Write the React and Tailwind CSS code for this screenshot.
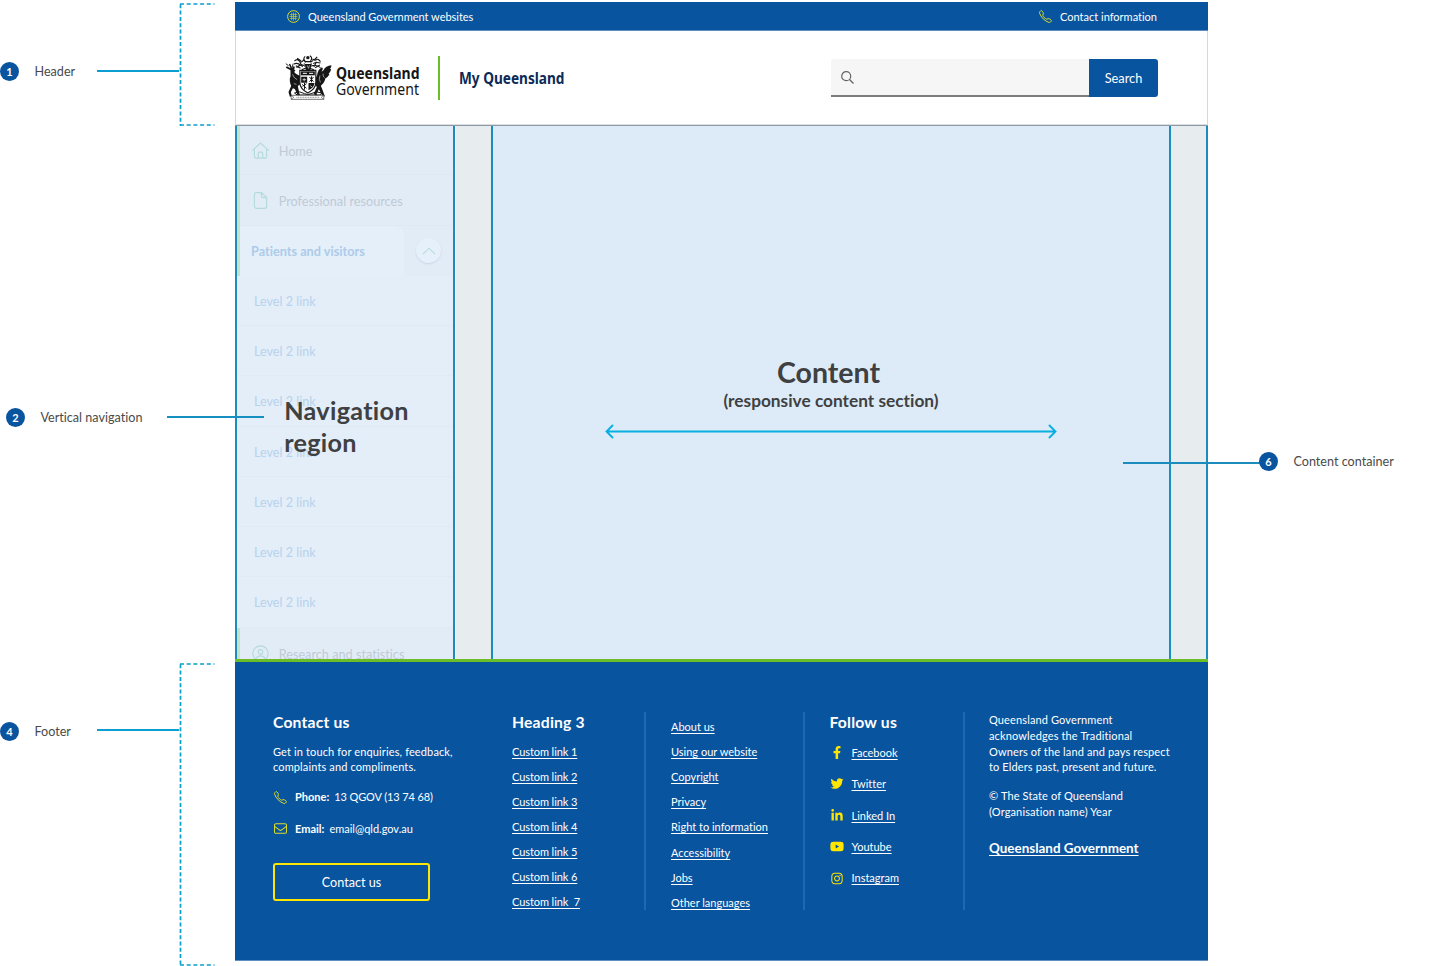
import React from "react";
import { FaFacebookF, FaTwitter, FaLinkedinIn, FaYoutube, FaInstagram } from "react-icons/fa";

const PHONE =
  "M3.65 1.33a.68.68 0 0 0-1.01-.06L1.6 2.3c-.48.49-.66 1.17-.45 1.77a17.6 17.6 0 0 0 4.17 6.61 17.6 17.6 0 0 0 6.61 4.17c.6.21 1.28.03 1.77-.45l1.03-1.04a.68.68 0 0 0-.06-1.01l-2.31-1.8a.68.68 0 0 0-.58-.12l-2.19.55a1.75 1.75 0 0 1-1.66-.46L5.48 8.06a1.75 1.75 0 0 1-.46-1.66l.55-2.19a.68.68 0 0 0-.12-.58z";

function PhoneIcon({ className }) {
  return (
    <svg viewBox="0.5 0.5 15 15" className={className} fill="none" stroke="currentColor" strokeWidth="1.15">
      <path d={PHONE} />
    </svg>
  );
}

function MailIcon({ className }) {
  return (
    <svg viewBox="0 0 13 11" className={className} fill="none" stroke="currentColor" strokeWidth="1.05">
      <rect x="0.5" y="0.7" width="12" height="9.6" rx="1.4" />
      <path d="M0.6 3.3 5.3 6.9q1.2.9 2.4 0L12.4 3.3" />
    </svg>
  );
}

function GlobeIcon() {
  return (
    <svg viewBox="0 0 13 13" className="h-[13px] w-[13px] text-[#d9dc2c]" fill="none" stroke="currentColor">
      <circle cx="6.5" cy="6.5" r="5.9" strokeWidth="1" />
      <path d="M4.6 2.8v7.4M6.5 2.5v8M8.4 2.8v7.4M2.8 4.6h7.4M2.5 6.5h8M2.8 8.4h7.4" strokeWidth="0.6" />
    </svg>
  );
}

function CoatOfArms() {
  return (
    <svg viewBox="0 0 140 135" className="h-[45px] w-[47px] shrink-0" fill="#161616">
      {/* crest */}
      <g fill="none" stroke="#161616" strokeWidth="3.4">
        <path d="M28 18q8-8 14 0t14-4M26 27q12-5 20 4M82 12q8 6 12 2t12 6M84 26q8-6 22-2M36 10l12 8M96 6l-8 8" />
        <path d="M60 4q-8 8 0 14M74 2q10 6 2 16M58 20h20M56 26q10 8 24 0M54 14l8 8M84 16l-8 6" />
        <path d="M34 38q14-14 26-4M78 34q12-8 28 4M50 44q16-10 36 0M32 32l14 8M104 30l-14 8M44 22l8 14M94 20l-8 16" />
      </g>
      <circle cx="68" cy="8" r="5" />
      <path d="M59 27h20l-3 18H62z" />
      <path d="M66 31l4 9M73 31l-3 9" stroke="#fff" strokeWidth="1.6" />
      {/* stag */}
      <path d="M16 46l-14-8 3-4 11 6-5-12 4-2 6 13 5-6 3 3-2 8 4 2-4 5c4 6 10 8 18 12l4 10-3 14-8 6 2 10 4 18-6 1-9-20-6-2-6 12 3 12-6 1-4-14 8-18c-4-10-6-20-2-29z" />
      <path d="M2 26l8 6M24 26l-3 12" stroke="#161616" strokeWidth="2.8" />
      <path d="M22 58q4 12 14 16M26 86l8 2" stroke="#fff" strokeWidth="1.6" fill="none" />
      {/* brolga */}
      <path d="M96 60q2-16 12-22 5-1 5 4l-4 8 6-4c4-8 12-15 24-15-1 6-3 10-5 11 3 0 4 1 4 1-2 8-6 12-8 13 2 0 3 1 3 1-4 8-8 11-12 13-2 10-8 18-14 22l4 10 8 22-6 1-12-22-7 14 9 11-5 2-12-14 9-20-6-8c2-14 3-22 7-28z" />
      <path d="M104 62q-4 12 2 20M114 56q-2 8 4 12" stroke="#fff" strokeWidth="1.6" fill="none" />
      {/* shield */}
      <path d="M44 46h48v36q0 20-24 32-24-12-24-32z" fill="#fff" stroke="#161616" strokeWidth="3.4" />
      <path d="M47 49h42v12H47z" />
      <path d="M53 55h12M72 55h12" stroke="#fff" strokeWidth="3" />
      <path d="M48 65h18v18H48zM70 84h18q-1 14-18 22z" />
      <path d="M52 74h11M57 69v10M75 92l6 4" stroke="#fff" strokeWidth="2" />
      <path d="M73 66l12 14M85 66L73 80M79 64v18M51 88l13 12M64 86l-12 8M58 84v20" stroke="#161616" strokeWidth="3" />
      <path d="M28 114q16-8 30 2 10 5 20 0 14-10 32-2l-6 6H36z" fill="none" stroke="#161616" strokeWidth="3" />
      {/* motto scroll */}
      <path d="M18 121h98v12H18z" fill="#fff" stroke="#333" strokeWidth="2" />
      <path d="M18 121l8 6-8 6M116 121l-8 6 8 6" fill="none" stroke="#333" strokeWidth="1.6" />
      <path d="M34 127h68" stroke="#999" strokeWidth="3.4" strokeDasharray="3 2" />
    </svg>
  );
}

function Badge({ n }) {
  return (
    <span className="relative z-20 flex h-[19px] w-[19px] shrink-0 items-center justify-center rounded-full bg-[#09549f] text-[11px] font-bold leading-none text-white">
      {n}
    </span>
  );
}

function Bracket({ h, className }) {
  return (
    <svg width="36" height={h} className={className} fill="none" stroke="#0a9fcb">
      <path d={`M1.5 1.3V${h}`} strokeWidth="1.7" strokeDasharray="4 2.3" />
      <path d={`M1 1H35.5M1 ${h - 1}H35.5`} strokeWidth="1.5" strokeDasharray="4 2.7" />
    </svg>
  );
}

const note = "mt-[2px] text-[12.6px] leading-[16px] text-[#4a4a4a] whitespace-nowrap";

function LeftRail() {
  return (
    <aside className="relative z-20 w-[235px] shrink-0">
      <div className="flex h-[126px] pt-[3px]">
        <div className="mt-[58.5px] flex h-[19px] w-[97px] items-center gap-[15.5px]">
          <Badge n="1" />
          <span className={note}>Header</span>
        </div>
        <div className="mt-[67px] h-[2px] w-[82px] bg-[#0a9fd0]" />
        <Bracket h={123} />
      </div>
      <div className="mt-[281.5px] flex h-[19px] items-center pl-[6px]">
        <Badge n="2" />
        <span className={`${note} ml-[15.5px] w-[126.5px] shrink-0`}>Vertical navigation</span>
        <div className="h-[2px] w-[97px] shrink-0 bg-[#1590c0]" />
      </div>
      <div className="mt-[236.5px] flex h-[303px]">
        <div className="mt-[58.5px] flex h-[19px] w-[97px] items-center gap-[15.5px]">
          <Badge n="4" />
          <span className={note}>Footer</span>
        </div>
        <div className="mt-[66px] h-[2px] w-[82px] bg-[#0a9fd0]" />
        <Bracket h={303} />
      </div>
    </aside>
  );
}

function Header() {
  return (
    <header className="relative z-10 h-[125px] border-b border-[#dcdfe2] pt-[2px] shadow-[0_1px_0_#8d9aa5]">
      <div className="flex h-[29px] items-center justify-between border-b border-[#5e8fc0] bg-[#09549f] pl-[52px] pr-[51px] text-[11px] text-white">
        <div className="flex items-center gap-[8px]">
          <GlobeIcon />
          <span className="mt-[2px] tracking-[-0.02px]">Queensland Government websites</span>
        </div>
        <div className="flex items-center gap-[8px]">
          <PhoneIcon className="h-[13px] w-[13px] text-[#d9dc2c]" />
          <span className="mt-[2px]">Contact information</span>
        </div>
      </div>
      <div className="flex h-[93px] items-center justify-between border-x border-[#d5d8da] pl-[49px] pr-[49px]">
        <div className="flex items-center">
          <CoatOfArms />
          <svg width="88" height="45" className="ml-[4px] shrink-0 overflow-visible font-['Noto_Sans',sans-serif]" fill="#161616">
            <text x="0" y="24" fontSize="15.8" fontWeight="700" textLength="83.5" lengthAdjust="spacingAndGlyphs">Queensland</text>
            <text x="0" y="40" fontSize="16" fontWeight="400" textLength="83" lengthAdjust="spacingAndGlyphs">Government</text>
          </svg>
          <div className="ml-[14px] h-[44px] w-[2px] bg-[#6bbe27]" />
          <svg width="112" height="30" className="ml-[19px] shrink-0 overflow-visible font-['Noto_Sans',sans-serif]" fill="#0b2b57">
            <text x="0" y="21" fontSize="15.5" fontWeight="700" textLength="105.5" lengthAdjust="spacingAndGlyphs">My Queensland</text>
          </svg>
        </div>
        <div className="flex h-[38px]">
          <div className="flex w-[258px] items-center rounded-tl-[3px] border-b-2 border-[#7c7c7c] bg-[#f6f6f6] pl-[10px] pt-[2px]">
            <svg viewBox="0 0 13 13" className="h-[13px] w-[13px]" fill="none" stroke="#636363" strokeWidth="1.2">
              <circle cx="5.2" cy="5.2" r="4.5" />
              <path d="M8.5 8.5 12.5 12.5" />
            </svg>
          </div>
          <button className="w-[69px] rounded-r-[3px] bg-[#09549f] pt-[3px] text-[12.8px] text-white">Search</button>
        </div>
      </div>
    </header>
  );
}

const navIcon = "mr-[9px] h-[19px] w-[19px] shrink-0 text-[#b5dbdc]";

function NavRow({ icon, children }) {
  return (
    <div className="flex h-[50.25px] shrink-0 items-center border-l-[3px] border-l-[#c3e3cc] bg-[#e2ecf7] pl-[10.7px] pt-[1px] text-[12.7px] text-[#c0cad5] shadow-[inset_0_-1px_0_#dfe9f4]">
      {icon}
      <span className="mt-[2px]">{children}</span>
    </div>
  );
}

function HomeIcon() {
  return (
    <svg viewBox="0 0 19 19" className={navIcon} fill="none" stroke="currentColor" strokeWidth="1.2">
      <path d="M1.2 9.6 9.5 2l8.3 7.6M3.4 8v7.2q0 2 2 2h8.2q2 0 2-2V8M7.3 17v-4.4q0-1.5 1.3-1.5h1.8q1.3 0 1.3 1.5V17" />
    </svg>
  );
}

function FileIcon() {
  return (
    <svg viewBox="0 0 19 19" className={navIcon} fill="none" stroke="currentColor" strokeWidth="1.2">
      <path d="M10.6 1.7H5.4q-2 0-2 2v11.6q0 2 2 2h8.2q2 0 2-2V6.5zM10.4 1.8v3.2q0 1.7 1.7 1.7h3.3" />
    </svg>
  );
}

function PersonIcon() {
  return (
    <svg viewBox="0 0 19 19" className={navIcon} fill="none" stroke="currentColor" strokeWidth="1.2">
      <circle cx="9.5" cy="9.5" r="7.7" />
      <circle cx="9.5" cy="7.9" r="2.2" />
      <path d="M4.6 15.4q1-3.6 4.9-3.6t4.9 3.6" />
    </svg>
  );
}

function Nav() {
  return (
    <nav className="relative flex w-[220px] shrink-0 flex-col overflow-hidden border-x-2 border-[#1a8dbd] bg-[#e3eef9]">
      <NavRow icon={<HomeIcon />}>Home</NavRow>
      <NavRow icon={<FileIcon />}>Professional resources</NavRow>
      <div className="flex h-[50.25px] shrink-0 items-center border-l-[3px] border-[#c3e3cc] bg-[#e2ecf7]">
        <div className="flex h-full w-[164px] items-center rounded-tr-[10px] bg-[#e4effa] pl-[11px] pt-[2px] text-[12.7px] font-bold text-[#adcbe9]">
          Patients and visitors
        </div>
        <div className="ml-[12px] flex h-[25px] w-[25px] items-center justify-center rounded-full bg-[#e6f0fa] shadow-[0_1px_2px_#c8d5e4]">
          <svg viewBox="0 0 14 8" className="h-[8px] w-[14px]" fill="none" stroke="#b5dbdc" strokeWidth="1.1">
            <path d="M1 7.2 7 1.2l6 6" />
          </svg>
        </div>
      </div>
      {[0, 1, 2, 3, 4, 5, 6].map((i) => (
        <div
          key={i}
          className="ml-[1px] flex h-[50.25px] shrink-0 items-center pl-[16px] pt-[3px] text-[12.6px] text-[#b9d2ec] shadow-[inset_0_-1px_0_#e0eaf6]"
        >
          Level 2 link
        </div>
      ))}
      <NavRow icon={<PersonIcon />}>Research and statistics</NavRow>
      <h2 className="absolute left-[47.2px] top-[270px] text-[25.2px] font-bold leading-[31.5px] tracking-[0.3px] text-[#3f4041]">
        Navigation
        <br />
        region
      </h2>
    </nav>
  );
}

function Main() {
  return (
    <main className="flex h-[534px] bg-[#e7ecef]">
      <Nav />
      <div className="w-[36px] shrink-0 border-l border-white" />
      <section className="flex w-[680px] shrink-0 flex-col items-center border-x-2 border-[#1a8dbd] bg-[#ddebf8] pt-[229px] text-[#3f4041]">
        <h2 className="-ml-[5px] text-[28.5px] font-bold leading-[36px]">Content</h2>
        <p className="text-[17.3px] font-bold leading-[22px]">(responsive content section)</p>
        <svg width="452" height="16" className="mt-[11.5px]" fill="none" stroke="#09afe0" strokeWidth="1.9" strokeLinecap="round">
          <path d="M1.5 7.5 450.5 7.5M7.5 1.5l-6 6 6 6M444.5 1.5l6 6-6 6" />
        </svg>
      </section>
      <div className="flex-1 border-r-2 border-[#1a8dbd]" />
    </main>
  );
}

const heading = "text-[15.7px] font-bold leading-[20px] tracking-[0.2px]";
const link = "underline decoration-[0.8px] underline-offset-[2px] whitespace-pre";

const custom = ["Custom link 1", "Custom link 2", "Custom link 3", "Custom link 4", "Custom link 5", "Custom link 6", "Custom link  7"];
const pages = ["About us", "Using our website", "Copyright", "Privacy", "Right to information", "Accessibility", "Jobs", "Other languages"];
const social = [
  [FaFacebookF, "Facebook"],
  [FaTwitter, "Twitter"],
  [FaLinkedinIn, "Linked In"],
  [FaYoutube, "Youtube"],
  [FaInstagram, "Instagram"],
];

function Links({ items }) {
  return (
    <ul>
      {items.map((t) => (
        <li key={t} className="flex h-[25.15px] items-center">
          <a className={link}>{t}</a>
        </li>
      ))}
    </ul>
  );
}

function Footer() {
  return (
    <footer className="flex h-[302px] border-b border-t-[3px] border-b-[#5e8fc0] border-t-[#6bbe27] bg-[#09549f] pl-[38px] pt-[49.5px] text-[11px] leading-[15.7px] text-white">
      <div className="w-[239px] shrink-0">
        <h3 className={heading}>Contact us</h3>
        <p className="mt-[12.2px] whitespace-nowrap tracking-[0.13px]">
          Get in touch for enquiries, feedback,
          <br />
          complaints and compliments.
        </p>
        <p className="mt-[14.3px] flex items-center">
          <PhoneIcon className="ml-[1px] mr-[8px] h-[13px] w-[13px] text-[#d9dc2c]" />
          <b className="mr-[5px]">Phone:</b>
          <span className="tracking-[-0.12px]">13 QGOV (13 74 68)</span>
        </p>
        <p className="mt-[15.7px] flex items-center">
          <MailIcon className="ml-[1px] mr-[8px] h-[11px] w-[13px] text-[#d9dc2c]" />
          <b className="mr-[5px]">Email:</b>email@qld.gov.au
        </p>
        <button className="mt-[26.5px] h-[38px] w-[157px] rounded-[3px] border-2 border-[#ffe600] pt-[1.5px] text-[12.6px]">Contact us</button>
      </div>
      <div className="w-[132px] shrink-0 tracking-[-0.08px]">
        <h3 className={`${heading} mb-[7.3px]`}>Heading 3</h3>
        <Links items={custom} />
      </div>
      <div className="h-[198px] w-[159px] shrink-0 border-l-2 border-[#1d69b6] pl-[25px] pt-[2.6px]">
        <Links items={pages} />
      </div>
      <div className="h-[198px] w-[160px] shrink-0 border-l-2 border-[#1d69b6] pl-[24.5px]">
        <h3 className={heading}>Follow us</h3>
        <ul className="mt-[5.4px]">
          {social.map(([Icon, t]) => (
            <li key={t} className="flex h-[31.4px] items-center">
              <span className="mr-[7px] flex w-[15px] justify-center">
                <Icon className="h-[13px] w-[14px] text-[#ffe600]" />
              </span>
              <a className={link}>{t}</a>
            </li>
          ))}
        </ul>
      </div>
      <div className="h-[198px] flex-1 whitespace-nowrap border-l-2 border-[#1d69b6] pl-[24px] pt-[0.6px] tracking-[0.13px]">
        <p>
          Queensland Government
          <br />
          acknowledges the Traditional
          <br />
          Owners of the land and pays respect
          <br />
          to Elders past, present and future.
        </p>
        <p className="mt-[12.9px]">
          © The State of Queensland
          <br />
          (Organisation name) Year
        </p>
        <a className="mt-[18.7px] block text-[13.45px] font-bold leading-[20px] tracking-normal underline decoration-[1px] underline-offset-[2px]">
          Queensland Government
        </a>
      </div>
    </footer>
  );
}

export default function App() {
  return (
    <div className="flex h-[966px] w-[1442px] overflow-hidden bg-white font-['Lato',sans-serif] [font-variant-ligatures:none]">
      <LeftRail />
      <div className="w-[973px] shrink-0">
        <Header />
        <Main />
        <Footer />
      </div>
      <aside className="relative flex flex-1 items-start pl-[51px] pt-[451.5px]">
        <div className="absolute -left-[85px] top-[462px] h-[2px] w-[137px] bg-[#1a8dbd]" />
        <Badge n="6" />
        <span className="ml-[15.5px] mt-[2.5px] whitespace-nowrap text-[12.6px] leading-[16px] text-[#4a4a4a]">Content container</span>
      </aside>
    </div>
  );
}
